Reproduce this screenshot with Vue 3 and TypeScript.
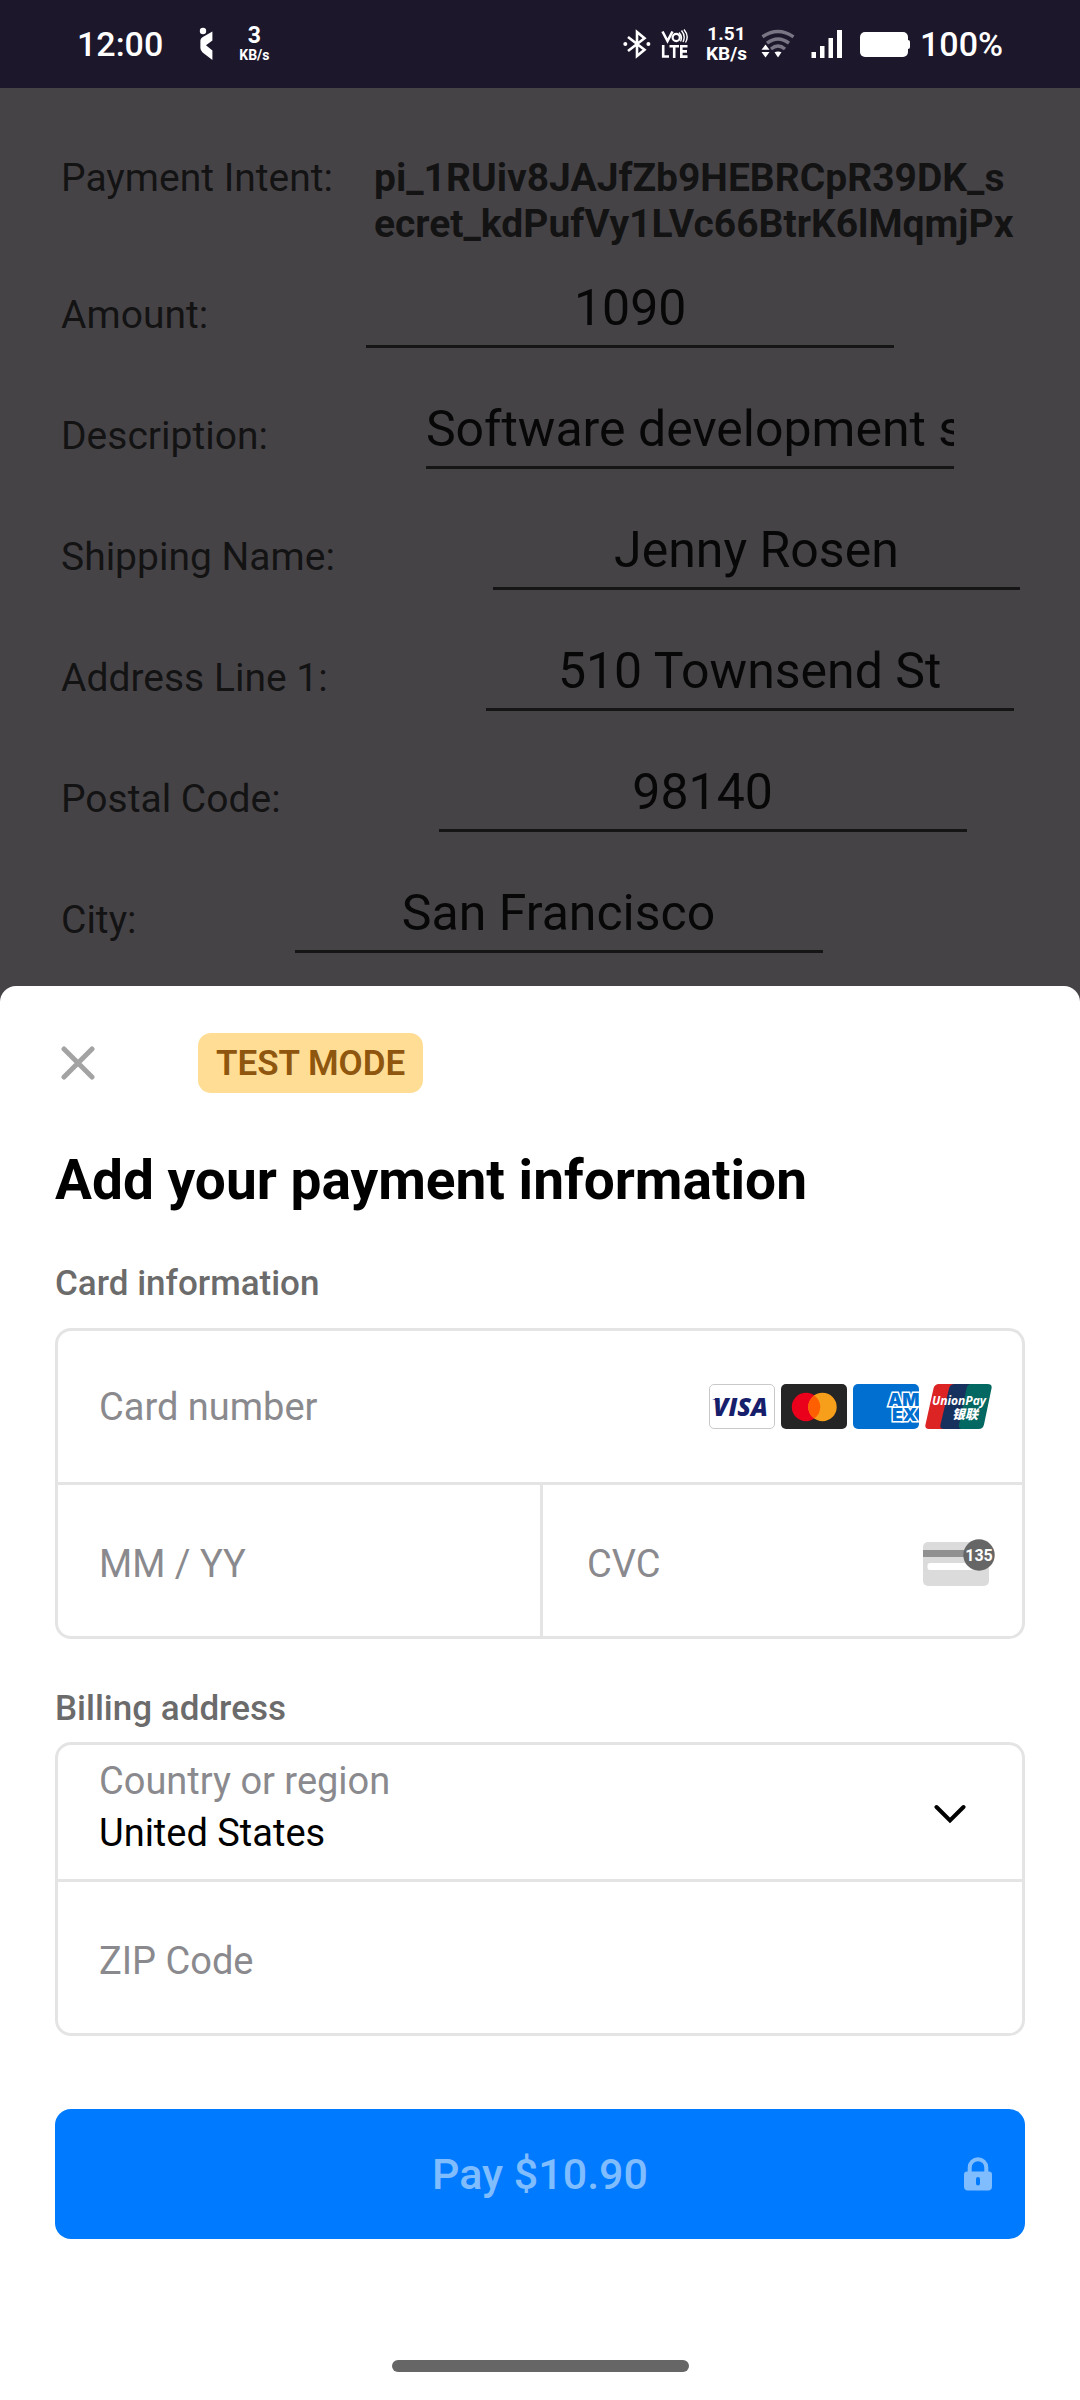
<script setup lang="ts">
import { ref } from 'vue'

interface DetailField {
  id: string
  label: string
  value: string
}

const intent = 'pi_1RUiv8JAJfZb9HEBRCpR39DK_secret_kdPufVy1LVc66BtrK6lMqmjPx'

const details = ref<DetailField[]>([
  { id: 'amount', label: 'Amount:', value: '1090' },
  { id: 'description', label: 'Description:', value: 'Software development services' },
  { id: 'shipping-name', label: 'Shipping Name:', value: 'Jenny Rosen' },
  { id: 'address', label: 'Address Line 1:', value: '510 Townsend St' },
  { id: 'postal', label: 'Postal Code:', value: '98140' },
  { id: 'city', label: 'City:', value: 'San Francisco' },
])

const cardNumber = ref('')
const expiry = ref('')
const cvc = ref('')
const country = ref('United States')
const zip = ref('')
</script>

<template>
  <div class="screen">
    <header class="status">
      <div class="status-side">
        <span class="clock">12:00</span>
        <svg class="app-mark" width="14" height="34" viewBox="0 0 14 34" aria-hidden="true">
          <circle cx="4" cy="4" r="3.2" />
          <path d="M13.4 4.5V13.5L7 18.2L13.4 23.5V33L3.6 25.5Q1.4 23.5 1.4 21V13.5Q1.4 11.5 3.4 10.2Z" />
        </svg>
        <span class="rate small"><b>3</b><i>KB/s</i></span>
      </div>
      <div class="status-side right">
        <svg width="28" height="30" viewBox="0 0 28 30" aria-hidden="true">
          <path d="M5 8L21.5 20.8L14 27V3L21.5 9.2L5 22" fill="none" stroke="#fff" stroke-width="2.6" />
          <circle cx="2.3" cy="15" r="2" /><circle cx="25.4" cy="15" r="2" />
        </svg>
        <svg class="volte" width="28" height="32" viewBox="0 0 28 32" aria-hidden="true">
          <path d="M1.5 3.5L6.5 13L11.5 3.5" fill="none" stroke="#fff" stroke-width="2.6" />
          <circle cx="15.2" cy="9.5" r="3.6" fill="none" stroke="#fff" stroke-width="2.2" />
          <path d="M18 4.5Q22 8.5 19.5 13.5M20.5 2.5Q25 8 22 14M23 1.5Q28.5 8 24.5 14.5" fill="none" stroke="#fff" stroke-width="1.4" />
          <path d="M2.2 17V28.5H8M8.5 18.3H18M13.2 18V30M26.5 18.3H20.3V28.6H26.5M20.3 23.4H26" fill="none" stroke="#fff" stroke-width="2.6" />
        </svg>
        <span class="rate"><b>1.51</b><i>KB/s</i></span>
        <svg class="wifi" width="34" height="30" viewBox="0 0 34 30" aria-hidden="true">
          <g fill="none" stroke="#797584" stroke-width="3.4">
            <path d="M1.5 7.8Q17 -3 32.5 7.8" /><path d="M6 14.2Q17 5.8 28 14.2" /><path d="M10 20Q17 14 24 20" />
          </g>
          <path d="M0.5 20.8L4.5 15.5L8.5 20.8ZM0.5 23L4.5 28.5L8.5 23Z" />
          <path d="M13.5 23.2Q17 21.6 20.5 23.2L17 28.5Z" />
        </svg>
        <svg class="signal" width="32" height="30" viewBox="0 0 32 30" aria-hidden="true">
          <path d="M0.5 23H5V29H0.5ZM9 17H13.5V29H9ZM17.5 9H22V29H17.5ZM26 1H31V29H26Z" />
        </svg>
        <svg class="battery" width="51" height="28" viewBox="0 0 51 28" aria-hidden="true">
          <rect x="0" y="2" width="48" height="25" rx="5" /><rect x="44" y="10" width="6" height="9" rx="2" />
        </svg>
        <span class="clock">100%</span>
      </div>
    </header>

    <main class="details">
      <div class="intent">
        <span>Payment Intent:</span>
        <strong>{{ intent }}</strong>
      </div>
      <div v-for="field in details" :key="field.id" class="detail">
        <label :for="field.id">{{ field.label }}</label>
        <input :id="field.id" v-model="field.value" type="text" />
      </div>
    </main>

    <section class="sheet">
      <div class="sheet-top">
        <button class="close" type="button" aria-label="Close">
          <svg width="34" height="34" viewBox="0 0 34 34" aria-hidden="true">
            <path d="M3 3L31 31M31 3L3 31" fill="none" stroke="#a3a3a3" stroke-width="5" stroke-linecap="round" />
          </svg>
        </button>
        <span class="badge">TEST MODE</span>
      </div>

      <h1>Add your payment information</h1>

      <form @submit.prevent>
        <h2>Card information</h2>
        <div class="box card-box">
          <div class="cell">
            <input v-model="cardNumber" type="text" inputmode="numeric" placeholder="Card number" aria-label="Card number" />
            <div class="brands">
              <svg width="66" height="45" viewBox="0 0 66 45" role="img" aria-label="Visa">
                <rect x="0.5" y="0.5" width="65" height="44" rx="4.5" fill="#fff" stroke="#c9c9c9" />
                <path d="M3 15H9L11 18.5Q7.5 15.6 3 15Z" fill="#171e6c" />
                <text x="4" y="32" class="visa">VISA</text>
              </svg>
              <svg width="66" height="45" viewBox="0 0 66 45" role="img" aria-label="Mastercard">
                <rect width="66" height="45" rx="5" fill="#252525" />
                <circle cx="25" cy="23" r="14.2" fill="#eb001b" />
                <circle cx="41.5" cy="23" r="14.2" fill="#f79e1b" />
                <path d="M33.25 11.4A14.2 14.2 0 0 1 33.25 34.6A14.2 14.2 0 0 1 33.25 11.4Z" fill="#ff5f00" />
              </svg>
              <svg width="66" height="45" viewBox="0 0 66 45" role="img" aria-label="American Express">
                <rect width="66" height="45" rx="5" fill="#016fd0" />
                <text class="amex"><tspan x="35" y="21.5">AM</tspan><tspan x="39" y="37">EX</tspan></text>
              </svg>
              <svg width="67" height="45" viewBox="0 0 67 45" role="img" aria-label="UnionPay">
                <path d="M14 0H30L20 45H4Q-0.5 45 0.5 40.5L8.5 4.5Q9.5 0 14 0Z" fill="#dd2425" />
                <path d="M30 0H46L36 45H19Q14.5 45 15.5 40.5L24 4.5Q25 0 30 0Z" fill="#16315e" />
                <path d="M46 0H62.5Q67.5 0 66.5 4.5L59 40.5Q58 45 53.5 45H38Q33 45 34 40.5L41.5 4.5Q42.5 0 46 0Z" fill="#036862" />
                <text class="union"><tspan x="7" y="21">UnionPay</tspan><tspan x="27" y="35" class="union-cjk">银联</tspan></text>
              </svg>
            </div>
          </div>
          <div class="split">
            <div class="cell low">
              <input v-model="expiry" type="text" inputmode="numeric" placeholder="MM / YY" aria-label="Expiration date" />
            </div>
            <div class="cell low cvc">
              <input v-model="cvc" type="text" inputmode="numeric" placeholder="CVC" aria-label="CVC" />
              <svg width="72" height="54" viewBox="0 0 72 54" aria-hidden="true">
                <rect x="0" y="5" width="66" height="44" rx="5" fill="#dbdbdb" />
                <rect x="0" y="13" width="66" height="7" fill="#919191" />
                <rect x="4.5" y="26" width="52" height="7" rx="2.5" fill="#fff" />
                <circle cx="56" cy="18" r="15.7" fill="#666" />
                <text x="56" y="24" class="digits">135</text>
              </svg>
            </div>
          </div>
        </div>

        <h2>Billing address</h2>
        <div class="box billing-box">
          <div class="country">
            <div class="country-field">
              <label for="country">Country or region</label>
              <select id="country" v-model="country">
                <option>United States</option>
                <option>Canada</option>
                <option>United Kingdom</option>
              </select>
            </div>
            <svg width="32" height="24" viewBox="0 0 32 24" aria-hidden="true">
              <path d="M2.5 7L16 20.5L29.5 7" fill="none" stroke="#000" stroke-width="4" stroke-linecap="round" />
            </svg>
          </div>
          <div class="cell low ruled">
            <input v-model="zip" type="text" placeholder="ZIP Code" aria-label="ZIP Code" />
          </div>
        </div>

        <button class="pay" type="submit" disabled>
          <span class="pay-text">Pay $10.90</span>
          <svg width="28" height="34" viewBox="0 0 28 34" aria-hidden="true">
            <path d="M5.7 16V10.5A8.3 8.3 0 0 1 22.3 10.5V16" fill="none" stroke="#80bdff" stroke-width="4" />
            <path fill-rule="evenodd" d="M3 14.5H25Q28 14.5 28 17.5V29.5Q28 33.5 24 33.5H4Q0 33.5 0 29.5V17.5Q0 14.5 3 14.5ZM14 20Q12 20 12 22V26.5Q12 28.5 14 28.5T16 26.5V22Q16 20 14 20Z" fill="#80bdff" />
          </svg>
        </button>
      </form>
      <div class="home"></div>
    </section>
  </div>
</template>

<style>
body {
  background: #464347;
}
</style>

<style scoped>
.screen,
.screen * {
  box-sizing: border-box;
}

.screen {
  display: flex;
  flex-direction: column;
  min-height: 100vh;
  background: #464347;
  font-family: Roboto, 'Liberation Sans', sans-serif;
  font-size: 39px;
  line-height: 46px;
}

svg {
  display: block;
  flex: none;
}

input,
select,
button {
  margin: 0;
  padding: 0;
  border: 0;
  border-radius: 0;
  background: none;
  font: inherit;
  color: inherit;
  outline: none;
}

/* Status bar */
.status {
  display: flex;
  justify-content: space-between;
  height: 88px;
  padding: 0 77px;
  background: #1c172b;
  color: #fff;
}

.status svg {
  fill: #fff;
}

.status-side {
  display: flex;
  align-items: center;
}

.clock {
  font-size: 34px;
  line-height: 40px;
  font-weight: 500;
}

.app-mark {
  margin-left: 36px;
}

.rate {
  display: flex;
  flex-direction: column;
  align-items: center;
  font-size: 19px;
  line-height: 20px;
  font-weight: 700;
}

.rate b,
.rate i {
  font-weight: inherit;
  font-style: normal;
}

.rate.small {
  margin-left: 26px;
}

.rate.small b {
  font-size: 23px;
  line-height: 22px;
}

.rate.small i {
  font-size: 14px;
  line-height: 16px;
}

.right .rate {
  margin-left: 17px;
}

.volte {
  margin-left: 10px;
}

.wifi {
  margin-left: 14px;
}

.signal {
  margin-left: 16px;
}

.battery {
  margin: 0 9px 0 17px;
}

/* Dimmed details form */
.details {
  display: flex;
  flex-direction: column;
  gap: 52px;
  padding: 67px 60px 33px 61px;
  color: #131314;
}

.intent {
  display: flex;
  gap: 41px;
  margin-bottom: -20px;
}

.intent span {
  flex: none;
}

.intent strong {
  flex: 1;
  font-weight: 700;
  word-break: break-all;
}

.detail {
  display: flex;
  align-items: flex-end;
  gap: 158px;
}

.detail label {
  flex: none;
  padding-bottom: 10px;
}

.detail input {
  flex: 0 1 528px;
  min-width: 0;
  height: 69px;
  padding-bottom: 8px;
  border-bottom: 3px solid #151516;
  font-size: 50px;
  line-height: 58px;
  text-align: center;
  color: #070708;
}

/* Payment sheet */
.sheet {
  display: flex;
  flex: 1;
  flex-direction: column;
  padding: 47px 55px 28px;
  border-radius: 16px 16px 0 0;
  background: #fff;
  font-size: 38px;
}

.sheet-top {
  display: flex;
  align-items: center;
  gap: 103px;
  padding-left: 6px;
}

.badge {
  padding: 2px 18px 0;
  border-radius: 13px;
  background: #ffdd94;
  color: #8e560e;
  font-size: 35px;
  line-height: 58px;
  font-weight: 600;
}

h1 {
  margin: 55px 0 0;
  padding-bottom: 2px;
  font-size: 55px;
  line-height: 64px;
  font-weight: 700;
  color: #000;
}

h2 {
  margin: 49px 0 0;
  font-size: 35px;
  line-height: 42px;
  font-weight: 500;
  color: #6b6b6b;
}

.box {
  border: 3px solid #e4e4e4;
  border-radius: 16px;
  color: #000;
}

.card-box {
  margin-top: 23px;
}

.billing-box {
  margin-top: 12px;
}

.cell {
  display: flex;
  align-items: center;
  min-width: 0;
  height: 151px;
  padding: 0 30px 0 41px;
}

.cell input {
  flex: 1;
  min-width: 0;
  height: 46px;
}

.cell input::placeholder {
  color: #8a8a8e;
  opacity: 1;
}

.cell.low {
  padding-top: 6px;
}

.brands {
  display: flex;
  gap: 6px;
}

.split {
  display: grid;
  grid-template-columns: 1fr 1fr;
  border-top: 3px solid #e4e4e4;
}

.cell.cvc {
  padding-right: 27px;
  padding-left: 44px;
  border-left: 3px solid #e4e4e4;
}

.country {
  display: flex;
  align-items: center;
  height: 134px;
  padding: 0 56px 0 41px;
}

.country-field {
  display: flex;
  flex: 1;
  flex-direction: column;
  gap: 6px;
  padding-bottom: 10px;
}

.country-field label {
  color: #8a8a8e;
}

.country-field select {
  height: 46px;
  appearance: none;
}

.cell.ruled {
  height: 154px;
  border-top: 3px solid #e4e4e4;
}

.pay {
  display: grid;
  grid-template-columns: 1fr auto 1fr;
  align-items: center;
  width: 100%;
  height: 130px;
  margin-top: 73px;
  padding: 0 33px;
  border-radius: 16px;
  background: #007aff;
  color: #80bdff;
  font-size: 43px;
  line-height: 52px;
  font-weight: 500;
}

.pay-text {
  grid-column: 2;
}

.pay svg {
  justify-self: end;
}

.home {
  width: 297px;
  height: 12px;
  margin: auto auto 0;
  border-radius: 6px;
  background: #666;
}

/* Lettering inside the brand marks */
.visa {
  font: italic 800 25px 'Open Sans', sans-serif;
  fill: #171e6c;
}

.amex {
  font: 900 18px Inter, sans-serif;
  fill: #016fd0;
  stroke: #fff;
  stroke-width: 3px;
  paint-order: stroke;
}

.union {
  font: italic 700 12px 'Open Sans', sans-serif;
  fill: #fff;
}

.union-cjk {
  font: italic 900 13px 'Noto Sans CJK SC', sans-serif;
}

.digits {
  font: 700 16px Roboto, sans-serif;
  fill: #fff;
  text-anchor: middle;
}
</style>
